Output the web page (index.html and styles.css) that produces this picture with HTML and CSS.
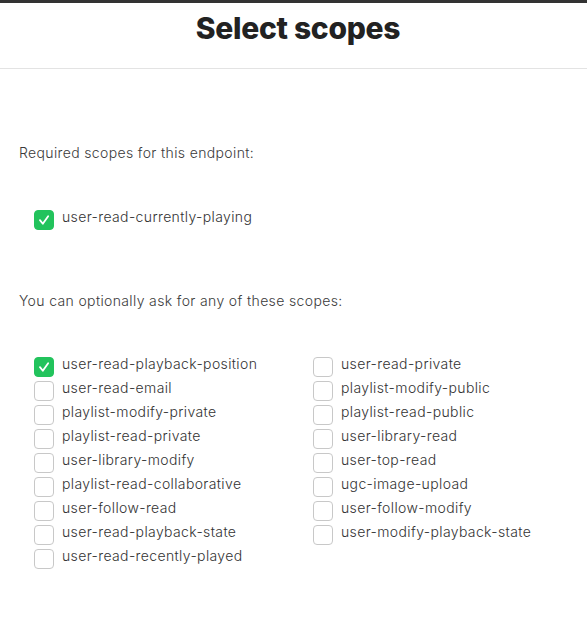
FILE: index.html
```html
<!DOCTYPE html>
<html lang="en">
<head>
<meta charset="utf-8">
<title>Select scopes</title>
<link rel="stylesheet" href="styles.css">
</head>
<body>
<header class="header">
  <h1 class="title">Select scopes</h1>
</header>
<main class="content">
  <p class="label label-required">Required scopes for this endpoint:</p>
  <div class="required">
    <label class="scope"><span class="box checked"><svg viewBox="0 0 20 20"><path d="M5.5 10.2 L8.7 14.2 L14.6 5.8"/></svg></span><span class="name">user-read-currently-playing</span></label>
  </div>
  <p class="label label-optional">You can optionally ask for any of these scopes:</p>
  <div class="grid">
    <label class="scope"><span class="box checked"><svg viewBox="0 0 20 20"><path d="M5.5 10.2 L8.7 14.2 L14.6 5.8"/></svg></span><span class="name">user-read-playback-position</span></label>
    <label class="scope"><span class="box"></span><span class="name">user-read-email</span></label>
    <label class="scope"><span class="box"></span><span class="name">playlist-modify-private</span></label>
    <label class="scope"><span class="box"></span><span class="name">playlist-read-private</span></label>
    <label class="scope"><span class="box"></span><span class="name">user-library-modify</span></label>
    <label class="scope"><span class="box"></span><span class="name">playlist-read-collaborative</span></label>
    <label class="scope"><span class="box"></span><span class="name">user-follow-read</span></label>
    <label class="scope"><span class="box"></span><span class="name">user-read-playback-state</span></label>
    <label class="scope"><span class="box"></span><span class="name">user-read-recently-played</span></label>
    <label class="scope"><span class="box"></span><span class="name">user-read-private</span></label>
    <label class="scope"><span class="box"></span><span class="name">playlist-modify-public</span></label>
    <label class="scope"><span class="box"></span><span class="name">playlist-read-public</span></label>
    <label class="scope"><span class="box"></span><span class="name">user-library-read</span></label>
    <label class="scope"><span class="box"></span><span class="name">user-top-read</span></label>
    <label class="scope"><span class="box"></span><span class="name">ugc-image-upload</span></label>
    <label class="scope"><span class="box"></span><span class="name">user-follow-modify</span></label>
    <label class="scope"><span class="box"></span><span class="name">user-modify-playback-state</span></label>
  </div>
</main>
</body>
</html>
```

FILE: styles.css
```css
html, body {
  margin: 0;
  padding: 0;
  background: #fff;
}
body {
  border-top: 3px solid #333;
  font-family: "Inter", "Noto Sans", sans-serif;
  color: #333;
}
.header {
  height: 65px;
  border-bottom: 1px solid #e3e3e3;
  display: flex;
  justify-content: center;
  padding-left: 9px;
}
.title {
  margin: 5px 0 0;
  font-size: 30px;
  line-height: 40px;
  font-weight: 800;
  color: #222;
  letter-spacing: -0.3px;
}
.content {
  padding: 0 0 0 19px;
}
.label {
  margin: 0;
  font-size: 14px;
  line-height: 20px;
  color: #3a3a3a;
  font-weight: 300;
  letter-spacing: 0.36px;
}
.label-required {
  padding-top: 74px;
}
.required {
  padding: 44px 0 0 15px;
}
.label-optional {
  padding-top: 61px;
}
.grid {
  padding: 43px 0 0 15px;
  display: grid;
  grid-template-columns: 279px 1fr;
  grid-template-rows: repeat(9, 24px);
  grid-auto-flow: column;
}
.scope {
  display: flex;
  align-items: flex-start;
  gap: 8px;
  font-size: 14px;
  line-height: 20px;
  color: #333;
  font-weight: 300;
  letter-spacing: 0.37px;
}
.box {
  flex: none;
  width: 18px;
  height: 18px;
  margin-top: 3px;
  border: 1px solid #c8c8c8;
  border-radius: 4px;
  background: #fff;
  display: flex;
}
.box.checked {
  background: #22c35c;
  border-color: #22c35c;
}
.box svg {
  width: 18px;
  height: 18px;
}
.box svg path {
  fill: none;
  stroke: #fff;
  stroke-width: 2;
  stroke-linecap: round;
  stroke-linejoin: round;
}
```
